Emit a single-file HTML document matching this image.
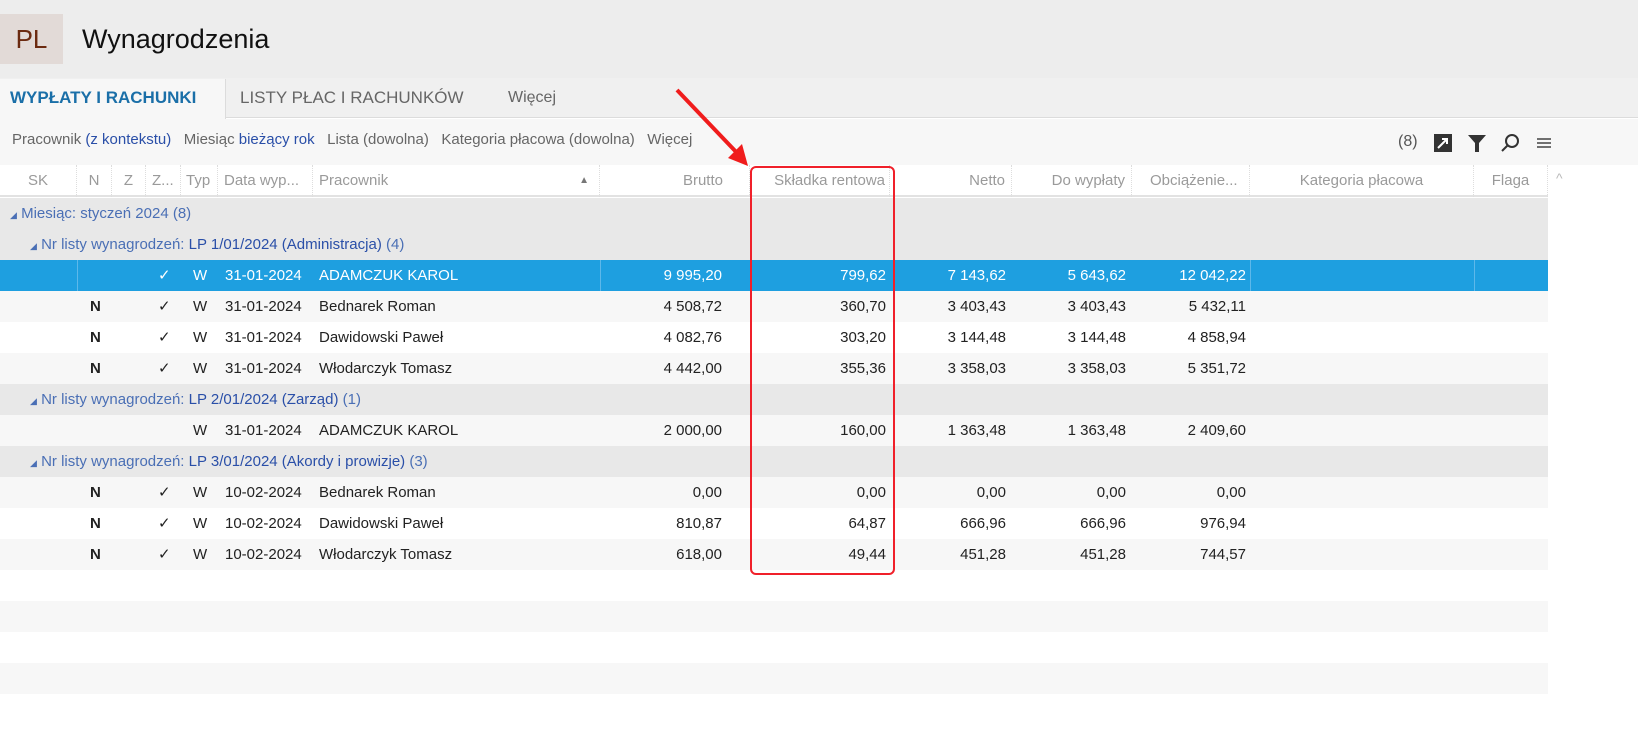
<!DOCTYPE html>
<html><head><meta charset="utf-8"><style>
*{margin:0;padding:0;box-sizing:border-box}
body{width:1638px;height:742px;overflow:hidden;background:#fff;font-family:"Liberation Sans",sans-serif;font-size:15px;color:#222;position:relative}
.a{position:absolute;white-space:nowrap}
.r{position:absolute;left:0;width:1548px;height:31px}
.r .c{position:absolute;top:0;height:31px;line-height:31px;white-space:nowrap}
.rt{text-align:right}
.g{background:#e8e8e8;color:#4a6fb5}
.sel{background:#1e9fe0;color:#fff}
.sel .bd{position:absolute;top:0;height:31px;border-left:1px solid #5db8ea}
.alt{background:#f7f7f7}
.hd{position:absolute;top:165px;left:0;width:1548px;height:32px;background:#fff;border-bottom:2px solid #e2e2e2;color:#9a9a9a}
.hd .c{position:absolute;top:0;height:32px;line-height:32px;white-space:nowrap;border-right:1px dotted #ddd}
.b{font-weight:bold}
</style></head><body>
<div class="a" style="left:0;top:0;width:1638px;height:78px;background:#ededed"></div>
<div class="a" style="left:0;top:14px;width:63px;height:50px;background:#e2dad7;color:#6b2a10;font-size:26px;line-height:50px;text-align:center">PL</div>
<div class="a" style="left:82px;top:20px;font-size:27px;line-height:38px;color:#111">Wynagrodzenia</div>
<div class="a" style="left:0;top:78px;width:1638px;height:40px;background:#f0f0f0;border-bottom:1px solid #dcdcdc"></div>
<div class="a" style="left:0;top:79px;width:226px;height:40px;background:#f7f7f7;border-right:1px solid #dcdcdc;color:#1a6fa8;font-weight:bold;font-size:17px;line-height:38px;padding-left:10px">WYPŁATY I RACHUNKI</div>
<div class="a" style="left:240px;top:79px;color:#666;font-size:17px;line-height:38px">LISTY PŁAC I RACHUNKÓW</div>
<div class="a" style="left:508px;top:79px;color:#666;font-size:16px;line-height:38px">Więcej</div>
<div class="a" style="left:0;top:119px;width:1638px;height:46px;background:#f7f7f7"></div>
<div class="a" style="left:12px;top:129px;color:#666;line-height:22px">Pracownik <span style="color:#2a4fa8">(z kontekstu)</span>&nbsp;&nbsp; Miesiąc <span style="color:#2a4fa8">bieżący rok</span>&nbsp;&nbsp; Lista (dowolna)&nbsp;&nbsp; Kategoria płacowa (dowolna)&nbsp;&nbsp; Więcej</div>
<div class="a" style="left:1398px;top:133px;color:#555;font-size:16px">(8)</div>
<svg class="a" style="left:1433px;top:133px" width="20" height="20" viewBox="0 0 20 20"><rect x="1" y="1" width="18" height="18" fill="#333"/><path d="M5 15L14 6M9 6h5v5" stroke="#fff" stroke-width="2" fill="none"/></svg>
<svg class="a" style="left:1467px;top:133px" width="20" height="20" viewBox="0 0 20 20"><path d="M1 2h18l-7 8v9h-4v-9z" fill="#333"/></svg>
<svg class="a" style="left:1500px;top:133px" width="20" height="20" viewBox="0 0 20 20"><circle cx="12" cy="8" r="6" stroke="#333" stroke-width="2" fill="none"/><path d="M8 12L2 18" stroke="#333" stroke-width="2"/></svg>
<svg class="a" style="left:1537px;top:137px" width="14" height="12" viewBox="0 0 14 12"><path d="M0 2h14M0 6h14M0 10h14" stroke="#444" stroke-width="1.5"/></svg>

<div class="hd">
<div class="c" style="left:0;width:77px;text-align:center">SK</div>
<div class="c" style="left:77px;width:35px;text-align:center">N</div>
<div class="c" style="left:112px;width:33px;text-align:center;border-right:none">Z</div>
<div class="c" style="left:145px;width:36px;padding-left:6px;border-left:1px dotted #ddd">Z...</div>
<div class="c" style="left:181px;width:37px;padding-left:5px;border-right:1px dotted #ddd">Typ</div>
<div class="c" style="left:218px;width:95px;padding-left:6px">Data wyp...</div>
<div class="c" style="left:313px;width:287px;padding-left:6px">Pracownik<span style="position:absolute;right:10px;font-size:10px;color:#777">▲</span></div>
<div class="c rt" style="left:600px;width:150px;padding-right:26px">Brutto</div>
<div class="c rt" style="left:750px;width:140px;padding-right:4px">Składka rentowa</div>
<div class="c rt" style="left:890px;width:122px;padding-right:6px">Netto</div>
<div class="c rt" style="left:1012px;width:120px;padding-right:6px">Do wypłaty</div>
<div class="c" style="left:1132px;width:118px;padding-left:18px">Obciążenie...</div>
<div class="c" style="left:1250px;width:224px;text-align:center">Kategoria płacowa</div>
<div class="c" style="left:1474px;width:74px;text-align:center">Flaga</div>
</div>
<div class="a" style="left:1556px;top:170px;color:#bbb;font-size:14px">^</div>

<div class="r g" style="top:198px"><div class="c" style="left:10px"><span style="font-size:9px">◢</span> Miesiąc: styczeń 2024 (8)</div></div>
<div class="r g" style="top:229px"><div class="c" style="left:30px"><span style="font-size:9px">◢</span> Nr listy wynagrodzeń: <span style="color:#2a4fa8">LP 1/01/2024 (Administracja)</span> (4)</div></div>
<div class="r sel" style="top:260px"><div class="bd" style="left:77px"></div><div class="bd" style="left:600px"></div><div class="bd" style="left:1250px"></div><div class="bd" style="left:1474px"></div>
<div class="c" style="left:158px">✓</div><div class="c" style="left:193px">W</div><div class="c" style="left:225px">31-01-2024</div><div class="c" style="left:319px">ADAMCZUK KAROL</div>
<div class="c rt" style="left:600px;width:122px">9 995,20</div><div class="c rt" style="left:750px;width:136px">799,62</div><div class="c rt" style="left:890px;width:116px">7 143,62</div><div class="c rt" style="left:1012px;width:114px">5 643,62</div><div class="c rt" style="left:1132px;width:114px">12 042,22</div></div>
<div class="r alt" style="top:291px"><div class="c b" style="left:90px">N</div><div class="c" style="left:158px">✓</div><div class="c" style="left:193px">W</div><div class="c" style="left:225px">31-01-2024</div><div class="c" style="left:319px">Bednarek Roman</div>
<div class="c rt" style="left:600px;width:122px">4 508,72</div><div class="c rt" style="left:750px;width:136px">360,70</div><div class="c rt" style="left:890px;width:116px">3 403,43</div><div class="c rt" style="left:1012px;width:114px">3 403,43</div><div class="c rt" style="left:1132px;width:114px">5 432,11</div></div>
<div class="r" style="top:322px"><div class="c b" style="left:90px">N</div><div class="c" style="left:158px">✓</div><div class="c" style="left:193px">W</div><div class="c" style="left:225px">31-01-2024</div><div class="c" style="left:319px">Dawidowski Paweł</div>
<div class="c rt" style="left:600px;width:122px">4 082,76</div><div class="c rt" style="left:750px;width:136px">303,20</div><div class="c rt" style="left:890px;width:116px">3 144,48</div><div class="c rt" style="left:1012px;width:114px">3 144,48</div><div class="c rt" style="left:1132px;width:114px">4 858,94</div></div>
<div class="r alt" style="top:353px"><div class="c b" style="left:90px">N</div><div class="c" style="left:158px">✓</div><div class="c" style="left:193px">W</div><div class="c" style="left:225px">31-01-2024</div><div class="c" style="left:319px">Włodarczyk Tomasz</div>
<div class="c rt" style="left:600px;width:122px">4 442,00</div><div class="c rt" style="left:750px;width:136px">355,36</div><div class="c rt" style="left:890px;width:116px">3 358,03</div><div class="c rt" style="left:1012px;width:114px">3 358,03</div><div class="c rt" style="left:1132px;width:114px">5 351,72</div></div>
<div class="r g" style="top:384px"><div class="c" style="left:30px"><span style="font-size:9px">◢</span> Nr listy wynagrodzeń: <span style="color:#2a4fa8">LP 2/01/2024 (Zarząd)</span> (1)</div></div>
<div class="r alt" style="top:415px"><div class="c" style="left:193px">W</div><div class="c" style="left:225px">31-01-2024</div><div class="c" style="left:319px">ADAMCZUK KAROL</div>
<div class="c rt" style="left:600px;width:122px">2 000,00</div><div class="c rt" style="left:750px;width:136px">160,00</div><div class="c rt" style="left:890px;width:116px">1 363,48</div><div class="c rt" style="left:1012px;width:114px">1 363,48</div><div class="c rt" style="left:1132px;width:114px">2 409,60</div></div>
<div class="r g" style="top:446px"><div class="c" style="left:30px"><span style="font-size:9px">◢</span> Nr listy wynagrodzeń: <span style="color:#2a4fa8">LP 3/01/2024 (Akordy i prowizje)</span> (3)</div></div>
<div class="r alt" style="top:477px"><div class="c b" style="left:90px">N</div><div class="c" style="left:158px">✓</div><div class="c" style="left:193px">W</div><div class="c" style="left:225px">10-02-2024</div><div class="c" style="left:319px">Bednarek Roman</div>
<div class="c rt" style="left:600px;width:122px">0,00</div><div class="c rt" style="left:750px;width:136px">0,00</div><div class="c rt" style="left:890px;width:116px">0,00</div><div class="c rt" style="left:1012px;width:114px">0,00</div><div class="c rt" style="left:1132px;width:114px">0,00</div></div>
<div class="r" style="top:508px"><div class="c b" style="left:90px">N</div><div class="c" style="left:158px">✓</div><div class="c" style="left:193px">W</div><div class="c" style="left:225px">10-02-2024</div><div class="c" style="left:319px">Dawidowski Paweł</div>
<div class="c rt" style="left:600px;width:122px">810,87</div><div class="c rt" style="left:750px;width:136px">64,87</div><div class="c rt" style="left:890px;width:116px">666,96</div><div class="c rt" style="left:1012px;width:114px">666,96</div><div class="c rt" style="left:1132px;width:114px">976,94</div></div>
<div class="r alt" style="top:539px"><div class="c b" style="left:90px">N</div><div class="c" style="left:158px">✓</div><div class="c" style="left:193px">W</div><div class="c" style="left:225px">10-02-2024</div><div class="c" style="left:319px">Włodarczyk Tomasz</div>
<div class="c rt" style="left:600px;width:122px">618,00</div><div class="c rt" style="left:750px;width:136px">49,44</div><div class="c rt" style="left:890px;width:116px">451,28</div><div class="c rt" style="left:1012px;width:114px">451,28</div><div class="c rt" style="left:1132px;width:114px">744,57</div></div>
<div class="r alt" style="top:601px"></div>
<div class="r alt" style="top:663px"></div>

<div class="a" style="left:750px;top:166px;width:145px;height:409px;border:2px solid #f0202a;border-radius:6px"></div>
<svg class="a" style="left:660px;top:80px" width="100" height="95" viewBox="0 0 100 95"><path d="M17 10L80 76" stroke="#f01c1c" stroke-width="4"/><path d="M88 86L68 78L82 64Z" fill="#f01c1c"/></svg>
</body></html>
